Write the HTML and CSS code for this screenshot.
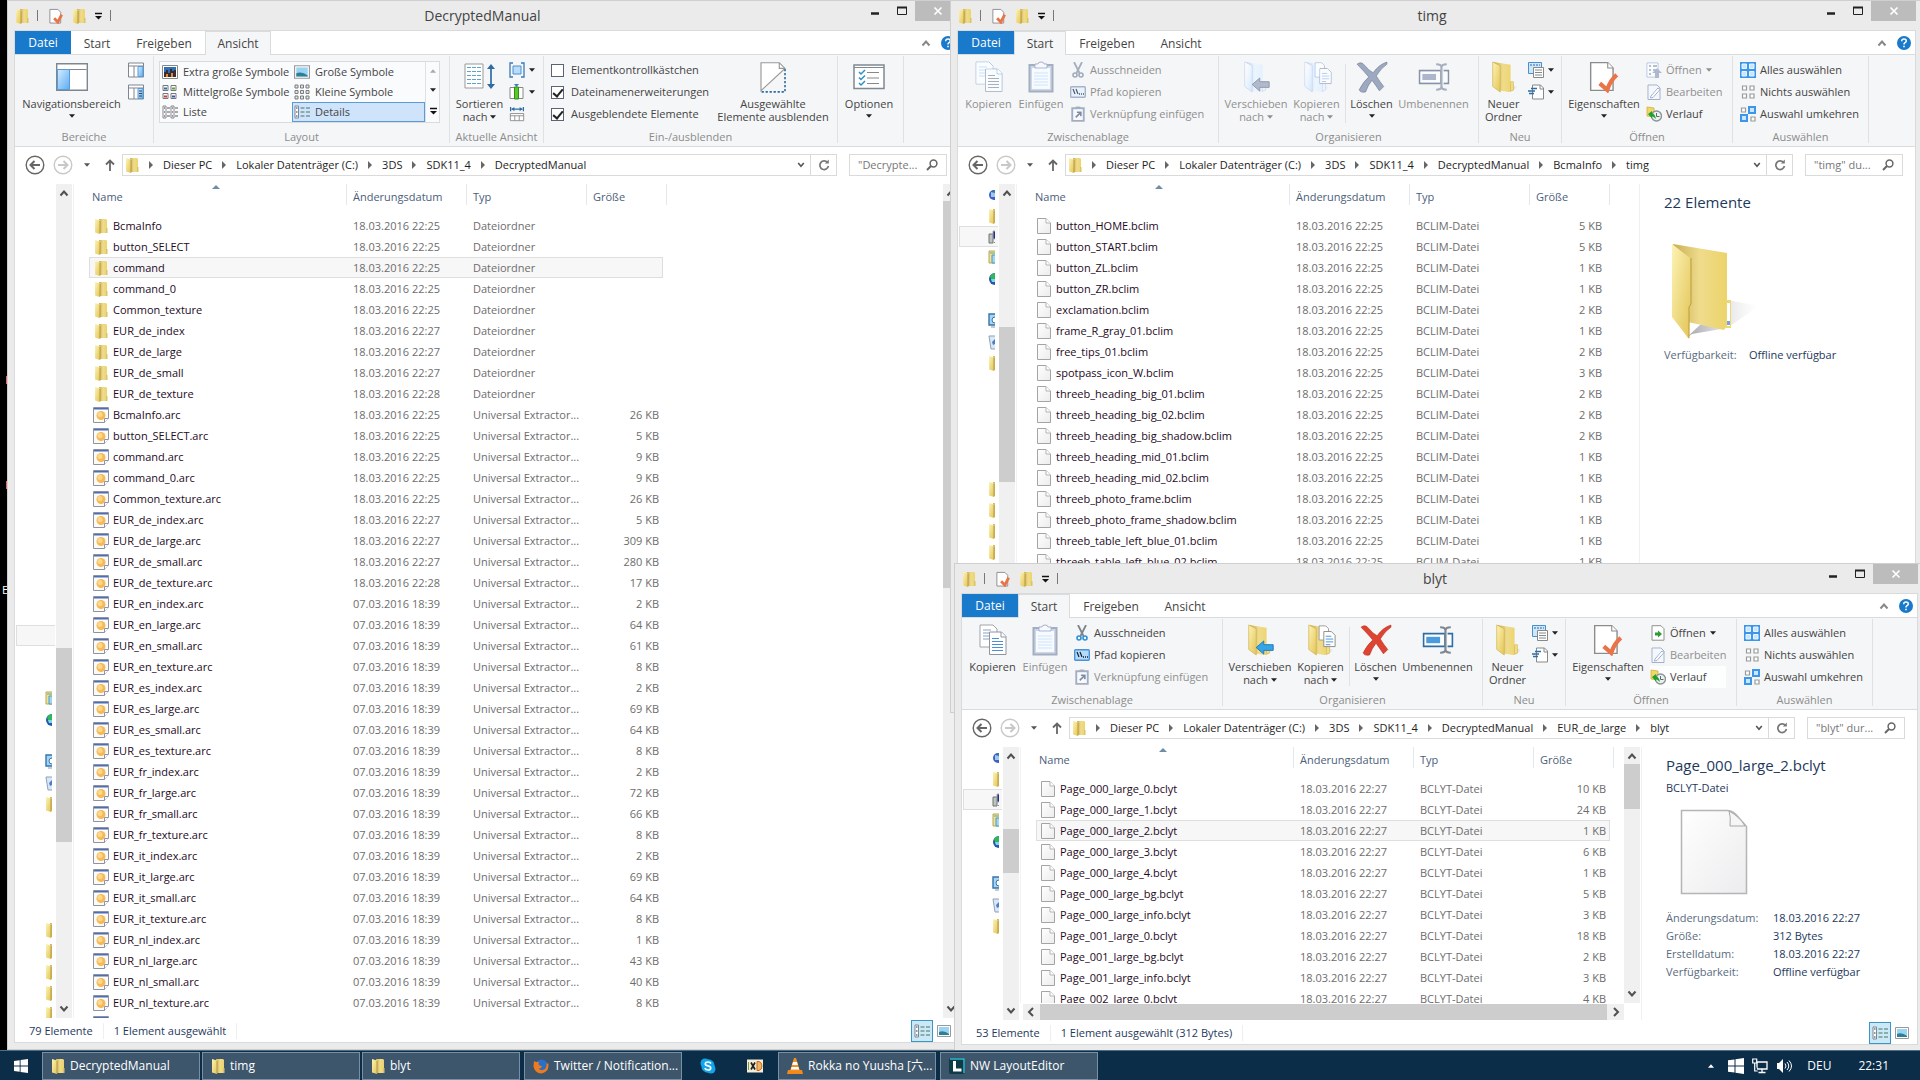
FILE: index.html
```html
<!DOCTYPE html>
<html lang="de">
<head>
<meta charset="utf-8">
<title>Desktop</title>
<link rel="stylesheet" href="styles.css">
</head>
<body>
<svg class="sprite" width="0" height="0" aria-hidden="true">
  <defs>
    <linearGradient id="gFold" x1="0" y1="0" x2="1" y2="1"><stop offset="0" stop-color="#fdf3b4"/><stop offset="1" stop-color="#e3c558"/></linearGradient>
    <linearGradient id="gBack" x1="0" y1="0" x2="1" y2="0"><stop offset="0" stop-color="#c9ad55"/><stop offset=".5" stop-color="#efdc8c"/><stop offset="1" stop-color="#ecd36a"/></linearGradient>
    <linearGradient id="gPage" x1="0" y1="0" x2="1" y2="1"><stop offset="0" stop-color="#ffffff"/><stop offset="1" stop-color="#ececee"/></linearGradient>
    <linearGradient id="gBlue" x1="0" y1="0" x2="1" y2="1"><stop offset="0" stop-color="#d5ebff"/><stop offset="1" stop-color="#5aaef5"/></linearGradient>
    <linearGradient id="gShade" x1="0" y1="0" x2="1" y2="0"><stop offset="0" stop-color="#8a8a94" stop-opacity=".8"/><stop offset="1" stop-color="#d8d8dc" stop-opacity="0"/></linearGradient>
  </defs>
  <symbol id="folder" viewBox="0 0 14 16"><path d="M5 1h7l1 1v13l-8 0z" fill="url(#gBack)"/><path d="M1 1l5 1.500v13.500l-5-1.500z" fill="url(#gFold)"/><path d="M6 3v12.500" stroke="#b79a3e" stroke-width="1"/><path d="M12 10h1.500v5h-1.500z" fill="#d9c468"/></symbol>
  <symbol id="folder-lg" viewBox="0 0 32 34"><path d="M21 24l10 4-9 5z" fill="url(#gShade)"/><path d="M5 1l18 3v22l2 1v4l-4 2-11-2z" fill="url(#gBack)"/><path d="M4 1l8 4v28l-8-6z" fill="url(#gFold)" stroke="#cfae4a" stroke-width=".7"/><path d="M23 22h3v9l-3 1z" fill="#f3df84" stroke="#cfae4a" stroke-width=".6"/></symbol>
  <symbol id="folder-xl" viewBox="0 0 90 98"><path d="M58 58l32 6-32 22-35 6-6 4z" fill="url(#gShade)"/><path d="M4 2l54 9v72l-3 5-36-8z" fill="url(#gBack)"/><path d="M3 2l18 14v46l-1 35-17-22z" fill="url(#gFold)"/><path d="M22 16v46l-2 3v31" fill="none" stroke="#bd9c3c"/><path d="M57 58h5v28h-5z" fill="#ecd873"/><path d="M58 61h3v23h-3z" fill="#fff"/><path d="M58 79h3v4h-3z" fill="#7f9fdb"/></symbol>
  <symbol id="page" viewBox="0 0 14 16"><path d="M.5.500h8.500l4.500 4.500v10.500h-13z" fill="url(#gPage)" stroke="#a4a4a4"/><path d="M9 .500v4.500h4.500" fill="#fff" stroke="#b4b4b4"/></symbol>
  <symbol id="page-xl" viewBox="0 0 68 86"><path d="M1.500 1.500h46q6 0 12 8l7 8v67h-65z" fill="url(#gPage)" stroke="#b5b5b5" stroke-width="1.500"/><path d="M49 2q2 6 1 15h15q-5-9-16-15z" fill="#f6f6f6" stroke="#a8a8a8"/></symbol>
  <symbol id="arc" viewBox="0 0 16 16"><path d="M.5.500h15v10.500l-4 4.500h-11z" fill="#fbfaf5" stroke="#8d92a6"/><path d="M1 1h14v1.500h-14z" fill="#4a6fb8"/><circle cx="8" cy="8.500" r="4.500" fill="#f6b95a"/><circle cx="7" cy="7.500" r="2.500" fill="#fcd98a"/><path d="M11.500 15.500v-4h4" fill="#fff" stroke="#8d92a6"/></symbol>
  <symbol id="props" viewBox="0 0 16 17"><path d="M1.500 1.500h8.500l3 3v11.500h-11.500z" fill="#fff" stroke="#8d8d8d"/><path d="M6 11l4 4 4-8" fill="none" stroke="#ea7347" stroke-width="3"/></symbol>
  <symbol id="props-lg" viewBox="0 0 28 30"><path d="M1.500 1.500h16l5 5v21h-21z" fill="#fff" stroke="#8c8c8c" stroke-width="1.300"/><path d="M17.500 1.500v5h5" fill="#fff" stroke="#8c8c8c"/><path d="M10 21l7 6q3-9 9-14" fill="none" stroke="#ea7347" stroke-width="4"/></symbol>
  <symbol id="qat" viewBox="0 0 8 8"><path d="M1 1.500h7" stroke="#111" stroke-width="1.500"/><path d="M1 4h7l-3.500 3.500z" fill="#111"/></symbol>
  <symbol id="down" viewBox="0 0 7 4"><path d="M0 0h7l-3.500 4z" fill="currentColor"/></symbol>
  <symbol id="up" viewBox="0 0 7 4"><path d="M0 4h7l-3.500-4z" fill="currentColor"/></symbol>
  <symbol id="chev-u" viewBox="0 0 10 8"><path d="M1.500 6.500l3.500-4 3.500 4" fill="none" stroke="currentColor" stroke-width="2"/></symbol>
  <symbol id="chev-d" viewBox="0 0 10 8"><path d="M1.500 1.500l3.500 4 3.500-4" fill="none" stroke="currentColor" stroke-width="2"/></symbol>
  <symbol id="chev-l" viewBox="0 0 8 10"><path d="M6 1l-4 4 4 4" fill="none" stroke="currentColor" stroke-width="2"/></symbol>
  <symbol id="chev-r" viewBox="0 0 8 10"><path d="M2 1l4 4-4 4" fill="none" stroke="currentColor" stroke-width="2"/></symbol>
  <symbol id="min" viewBox="0 0 10 10"><path d="M1 7.500h8" stroke="#222" stroke-width="2.500"/></symbol>
  <symbol id="max" viewBox="0 0 10 10"><path d="M.5 1.500h9v7h-9z" fill="none" stroke="#222"/><path d="M0 1.500h10" stroke="#222" stroke-width="2"/></symbol>
  <symbol id="close" viewBox="0 0 10 10"><path d="M1.500 1.500l7 7M8.500 1.500l-7 7" stroke="#fff" stroke-width="1.700"/></symbol>
  <symbol id="help" viewBox="0 0 14 14"><circle cx="7" cy="7" r="7" fill="#1979ca"/><path d="M4.700 5.200q0-2.200 2.300-2.200t2.300 2q0 1-1.200 1.700t-1.100 1.800" fill="none" stroke="#fff" stroke-width="1.500"/><path d="M6.200 9.800h1.600v1.500h-1.600z" fill="#fff"/></symbol>
  <symbol id="back" viewBox="0 0 20 20"><circle cx="10" cy="10" r="8.800" fill="#fff" stroke="currentColor" stroke-width="1.400"/><path d="M15 10h-9M9.500 6l-4 4 4 4" fill="none" stroke="currentColor" stroke-width="2"/></symbol>
  <symbol id="fwd" viewBox="0 0 20 20"><circle cx="10" cy="10" r="8.800" fill="#fff" stroke="currentColor" stroke-width="1.400"/><path d="M5 10h9M10.500 6l4 4-4 4" fill="none" stroke="currentColor" stroke-width="2"/></symbol>
  <symbol id="upnav" viewBox="0 0 10 12"><path d="M5 12v-10M1 5.500l4-4 4 4" fill="none" stroke="#666" stroke-width="1.800"/></symbol>
  <symbol id="reload" viewBox="0 0 12 12"><path d="M9.500 3.500a4.300 4.300 0 1 0 .9 3.500" fill="none" stroke="#777" stroke-width="1.700"/><path d="M10.800.500v4h-4z" fill="#777"/></symbol>
  <symbol id="lens" viewBox="0 0 12 12"><circle cx="7.500" cy="4.500" r="3.400" fill="none" stroke="#666" stroke-width="1.500"/><path d="M5 7l-4 4" stroke="#666" stroke-width="2"/></symbol>
  <symbol id="navpane" viewBox="0 0 32 28"><path d="M.7.700h30.600v26.600h-30.600z" fill="#fff" stroke="#7e8790" stroke-width="1.400"/><path d="M1.500 6.500h29" stroke="#7e8790"/><path d="M1.500 6.500h12v20h-12z" fill="url(#gBlue)" stroke="#5a9bd5"/></symbol>
  <symbol id="prevpane" viewBox="0 0 16 16"><path d="M.5 1h15v14h-15z" fill="#fff" stroke="#7e8790"/><path d="M.5 4h15M6 4v11" stroke="#7e8790"/><path d="M10 4.500h5v10h-5z" fill="url(#gBlue)" stroke="#5a9bd5"/></symbol>
  <symbol id="detpane" viewBox="0 0 16 16"><path d="M.5 1h15v14h-15z" fill="#fff" stroke="#7e8790"/><path d="M.5 4h15M6 4v11" stroke="#7e8790"/><path d="M10 4.500h5v10h-5z" fill="url(#gBlue)" stroke="#5a9bd5"/><path d="M11 7h3M11 9.500h3M11 12h3" stroke="#345"/></symbol>
  <symbol id="v-xl" viewBox="0 0 16 14"><path d="M.5.500h15v13h-15z" fill="#fff" stroke="#888"/><path d="M2 2h12v10h-12z" fill="#2f6fb5"/><path d="M2 12v-5h2v-2h2v3h2v-4h2v2h2v-1h2v7z" fill="#3a2c34"/><path d="M4 9h2v3h-2zM9 8h2v4h-2z" fill="#e48b2a"/></symbol>
  <symbol id="v-l" viewBox="0 0 14 12"><path d="M.5.500h13v11h-13z" fill="#fff" stroke="#999"/><path d="M2 2h10v8h-10z" fill="#9bd3f2"/><path d="M2 7q5-2 10 2v1h-10z" fill="#2d7f96"/></symbol>
  <symbol id="v-m" viewBox="0 0 16 15"><path d="M1 1h5v5h-5zM9 1h5v5h-5zM1 9h5v5h-5zM9 9h5v5h-5z" fill="#fff" stroke="#777"/><path d="M2 3h3v2h-3z" fill="#2d6fa8"/><path d="M10 3h3v2h-3z" fill="#58a33a"/><path d="M2 11h3v2h-3z" fill="#c74130"/><path d="M10 11h3v2h-3z" fill="#3b55a8"/></symbol>
  <symbol id="v-s" viewBox="0 0 16 16"><path d="M1 1h3v3h-3zM6.500 1h3v3h-3zM12 1h3v3h-3zM1 6.500h3v3h-3zM6.500 6.500h3v3h-3zM12 6.500h3v3h-3zM1 12h3v3h-3zM6.500 12h3v3h-3zM12 12h3v3h-3z" fill="#dfe8ee" stroke="#7b7b7b"/></symbol>
  <symbol id="v-list" viewBox="0 0 16 14"><path d="M1 1h3v12h-3zM9 1h3v12h-3z" fill="#fff" stroke="#888"/><path d="M2 3h1M2 7h1M2 11h1M10 3h1M10 7h1M10 11h1" stroke="#333"/><path d="M5 3h3M5 7h3M5 11h3M13 3h3M13 7h3M13 11h3" stroke="#557"/></symbol>
  <symbol id="v-det" viewBox="0 0 16 14"><path d="M1 1h3.500v12h-3.500z" fill="#fff" stroke="#7b8796"/><path d="M2 3h1.500M2 7h1.500M2 11h1.500" stroke="#333"/><path d="M6.500 3h4M6.500 7h4M6.500 11h4M12 3h4M12 7h4M12 11h4" stroke="#476"/></symbol>
  <symbol id="sort" viewBox="0 0 32 28"><path d="M1 1h18v24h-18z" fill="#fff" stroke="#999"/><path d="M3 4.500h14M3 8.500h14M3 12.500h14M3 16.500h14M3 20.500h14" stroke="#5ba5c9" stroke-dasharray="4 1"/><path d="M27 3v21" stroke="#2e6da4" stroke-width="1.700"/><path d="M23 6l4-5 4 5zM23 21l4 5 4-5z" fill="#2e6da4"/></symbol>
  <symbol id="group" viewBox="0 0 16 16"><path d="M4 1h-3v14h3M12 1h3v14h-3" fill="none" stroke="#3a7ab8" stroke-width="1.300"/><path d="M4 4h8v8h-8z" fill="#b9dcf8" stroke="#4a90cf"/></symbol>
  <symbol id="addcol" viewBox="0 0 16 16"><path d="M1 3.500h13v11h-13z" fill="#fff" stroke="#888"/><path d="M5.500 3h4v12h-4z" fill="#59c929" stroke="#2f8f17"/><path d="M5 0h5l-2.500 3z" fill="#3a7ab8"/></symbol>
  <symbol id="fitcol" viewBox="0 0 16 18"><path d="M.8 1v5M15.200 1v5M2 3.500h12" stroke="#2e6da4" stroke-width="1.400"/><path d="M2 3.500l3-2.500v5zM14 3.500l-3-2.500v5z" fill="#2e6da4"/><path d="M.5 8.500h15v8h-15zM.500 11h15M5.500 11v5.500M10.500 11v5.500" fill="#fff" stroke="#888"/></symbol>
  <symbol id="hide" viewBox="0 0 24 28"><path d="M1.500 26v-24.500h16l5 5z" fill="#fff" stroke="#999"/><path d="M17.500 1.500v5h5" fill="none" stroke="#999"/><path d="M22.500 7v20h-21" fill="none" stroke="#2e6da4" stroke-width="1.400" stroke-dasharray="2 1.500"/></symbol>
  <symbol id="options" viewBox="0 0 32 26"><path d="M1 1h30v23.500h-30z" fill="#fff" stroke="#808891" stroke-width="1.500"/><path d="M1 3.500h30" stroke="#808891"/><path d="M14 8.500h12M14 14h12M14 19.500h12" stroke="#888"/><path d="M6 8l2 2 4-4M6 13.500l2 2 4-4M6 19l2 2 4-4" fill="none" stroke="#2e8fc9" stroke-width="1.500"/></symbol>
  <symbol id="copy" viewBox="0 0 28 32"><path d="M1 1h13l4 4v18h-17z" fill="#fff" stroke="#a0a4aa"/><path d="M4 6h8M4 9h6M4 12h6M4 15h6" stroke="#8aa2bf"/><path d="M10.500 8h12l4.500 4.500v18h-16.500z" fill="#fff" stroke="#8f959c"/><path d="M22 8v5h5" fill="#fff" stroke="#8f959c"/><path d="M13 14.500h7M13 17.500h11M13 20.500h11M13 23.500h11M13 26.500h11" stroke="#4a90d9"/></symbol>
  <symbol id="paste" viewBox="0 0 26 32"><path d="M1.500 4h23v26.500h-23z" fill="#a8b6cb" stroke="#7286a8" stroke-width="2"/><path d="M4 7h18v21h-18z" fill="#e4ecf8"/><path d="M6 12h14M6 15h14M6 18h14M6 21h14M6 24h14" stroke="#a9b9d2"/><path d="M7 3h3q0-2 3-2t3 2h3v4h-12z" fill="#e2e9f3" stroke="#7286a8"/></symbol>
  <symbol id="cut" viewBox="0 0 12 16"><path d="M2 0l5.500 11M10 0l-5.500 11" stroke="#7c858e" stroke-width="1.800"/><circle cx="3" cy="13" r="2" fill="none" stroke="#2f8fd8" stroke-width="1.600"/><circle cx="9" cy="13" r="2" fill="none" stroke="#2f8fd8" stroke-width="1.600"/></symbol>
  <symbol id="path" viewBox="0 0 16 12"><rect x=".7" y=".7" width="14.600" height="10.600" rx="1" fill="#b6dbfa" stroke="#4a93d6" stroke-width="1.400"/><path d="M3 3l2 5M6 3l2 5" stroke="#123" stroke-width="1.200"/><path d="M9 8h1M11 8h1M13 8h1" stroke="#123" stroke-width="1.400"/></symbol>
  <symbol id="link" viewBox="0 0 12 14"><path d="M1 2h10v11h-10z" fill="#dde8f8" stroke="#6f86ad" stroke-width="1.700"/><path d="M4 .5h4v2h-4z" fill="#6f86ad"/><path d="M4 10l4-4M5 5.500h3.500v3.500" fill="none" stroke="#3c5c92" stroke-width="1.400"/></symbol>
  <symbol id="moveto" viewBox="0 0 32 34"><use href="#folder-lg" width="32" height="34"/><path d="M12 25l8-7v4h10v6h-10v4z" fill="#35a5ea" stroke="#1d78b8"/></symbol>
  <symbol id="copyto" viewBox="0 0 32 34"><use href="#folder-lg" x="-1" width="32" height="34"/><path d="M14 2h7l3 3v12h-10z" fill="#fff" stroke="#9a9a9a"/><path d="M19 8h8l4 4v12h-12z" fill="#fff" stroke="#8b8b8b"/><path d="M21 13h6M21 16h8M21 19h8M21 22h5" stroke="#4a90d9"/></symbol>
  <symbol id="delete" viewBox="0 0 30 30"><path d="M1 3q4-3 7 1 4 5 8 7 6-8 13-10l0 2q-5 3-10 11 3 5 7 10l-4 4q-4-6-7-10-4 5-6 11-5 1-6-2 4-8 9-12-4-5-11-12z" fill="#dd4432" stroke="#c02c20" stroke-width=".6"/></symbol>
  <symbol id="rename" viewBox="0 0 30 28"><path d="M1.500 8h20v12h-20z" fill="#fff" stroke="#2e6da4" stroke-width="1.500"/><path d="M4 11h13v6h-13z" fill="#4a9be0"/><path d="M24 8h4.500v12h-4.500" fill="#fff" stroke="#2e6da4" stroke-width="1.500"/><path d="M17 2q5 0 5 3v18q0 3-5 3M27 2q-5 0-5 3M27 26q-5 0-5-3" fill="none" stroke="#7c8791" stroke-width="2"/></symbol>
  <symbol id="newitem" viewBox="0 0 16 16"><path d="M.5.500h13v11h-13z" fill="#cfe6fb" stroke="#4a90cf"/><path d="M2 3h10" stroke="#2e6da4" stroke-dasharray="2 1"/><path d="M5.500 5.500h10v10h-10z" fill="#fff" stroke="#888"/><path d="M7 8h7M7 10.500h7M7 13h7" stroke="#888"/></symbol>
  <symbol id="easy" viewBox="0 0 16 16"><path d="M4.500 1h8l3 3v11h-11z" fill="#fff" stroke="#888"/><path d="M12 1v4h3" fill="none" stroke="#888"/><path d="M3 4.500h6M0 7h7M1 9.500h5" stroke="#2e6da4" stroke-width="1.400"/></symbol>
  <symbol id="open" viewBox="0 0 14 16"><path d="M1 .700h9l3 3v11.500h-12z" fill="#fff" stroke="#909090"/><path d="M4 7.500h3v-2l4 3.500-4 3.500v-2h-3z" fill="#2f9a3a"/></symbol>
  <symbol id="open-d" viewBox="0 0 16 16"><path d="M1 1h11v14h-11z" fill="#fff" stroke="#8a9bb8"/><path d="M3 4h2M7 4h4M3 8h2M7 8h4M3 12h2" stroke="#5d78a8" stroke-width="1.500"/><path d="M11 6l5 5h-3v5h-4v-5h-3z" fill="#7f93b5"/></symbol>
  <symbol id="edit" viewBox="0 0 14 16"><path d="M1 1h9l3 3v11.500h-12z" fill="#d3e2f6" stroke="#7089b0"/><path d="M4 12l7-8 2 1.500-7 8-2.500.500z" fill="#fff" stroke="#6a83ac"/></symbol>
  <symbol id="history" viewBox="0 0 16 16"><path d="M1 1l7 1v9l-7-1z" fill="#f1d768" stroke="#cfb040" stroke-width=".8"/><circle cx="10.500" cy="10" r="5" fill="#e9f3ee" stroke="#8a9299" stroke-width="1.400"/><path d="M10.500 7v3.500h3" fill="none" stroke="#667"/><path d="M2 8l4-3v2q3 1 4 6-3-3-4-2.500v2z" fill="#22a02c"/></symbol>
  <symbol id="selall" viewBox="0 0 16 16"><path d="M0 0h16v16h-16z" fill="#3c96ea"/><path d="M2 2h4.500v4.500h-4.500zM9.500 2h4.500v4.500h-4.500zM2 9.500h4.500v4.500h-4.500zM9.500 9.500h4.500v4.500h-4.500z" fill="#cbe5fc" stroke="#e9f5ff"/></symbol>
  <symbol id="selnone" viewBox="0 0 16 16"><path d="M2.500 2h4v4h-4zM10 2h4v4h-4zM2.500 10h4v4h-4zM10 10h4v4h-4z" fill="#fff" stroke="#9a9a9a" stroke-width="1.200"/></symbol>
  <symbol id="selinv" viewBox="0 0 16 16"><path d="M1.500 2h4v4h-4zM11 11h4v4h-4z" fill="#fff" stroke="#9a9a9a" stroke-width="1.200"/><path d="M9 1h6v6h-6zM1 9h6v6h-6z" fill="#cbe5fc" stroke="#3c96ea" stroke-width="2"/></symbol>
  <symbol id="n-net" viewBox="0 0 14 14"><circle cx="6" cy="7" r="5" fill="#3b63c4"/><path d="M3 4l4 1 0 4-4 0z" fill="#a7c4ee"/><path d="M6 3l2-2v8z" fill="#3fa045"/></symbol>
  <symbol id="n-pc" viewBox="0 0 14 16"><path d="M1 5h4v9h-4z" fill="#bfc4bf" stroke="#70756f"/><path d="M5 2h9v8h-9z" fill="#20307f" stroke="#aab"/><path d="M6 13h3v1h-3z" fill="#889"/></symbol>
  <symbol id="n-lib" viewBox="0 0 14 16"><path d="M1 1h10v12h-10z" fill="#efe09a" stroke="#b9a75a"/><path d="M4 5h9v8h-9z" fill="#a5d5ec" stroke="#4a9cc2"/><path d="M2 3h6" stroke="#6a8"/></symbol>
  <symbol id="n-home" viewBox="0 0 14 14"><circle cx="7" cy="7" r="6" fill="#2458a8"/><path d="M2 4q3-4 6-2v5l-4 3z" fill="#2fb85a"/><path d="M3 7h5v3h-4z" fill="#7fd4ea"/></symbol>
  <symbol id="n-panel" viewBox="0 0 14 16"><path d="M1 1h12v11h-12z" fill="#a9d3f2" stroke="#3376ac" stroke-width="1.400"/><circle cx="7" cy="7" r="3" fill="#fff" stroke="#3376ac"/><path d="M3 14h8" stroke="#89a"/></symbol>
  <symbol id="n-bin" viewBox="0 0 14 16"><path d="M1 2h12l-2 13h-8z" fill="#dbe7f4" stroke="#8ca3be"/><path d="M4 8l3-3 2 4-4 2z" fill="#4a80c4"/></symbol>
  <symbol id="win" viewBox="0 0 16 16"><path d="M0 2.300l6.500-.9v6.100h-6.500zM7.500 1.200l8.500-1.200v7.500h-8.500zM0 8.500h6.500v6.100l-6.500-.9zM7.500 8.500h8.500v7.500l-8.500-1.200z" fill="#fff"/></symbol>
  <symbol id="firefox" viewBox="0 0 16 16"><circle cx="8.500" cy="7.500" r="6" fill="#2d6fc4"/><path d="M1 3q1 1 2.500 1 1.500 0 2.500 0-1 2 0 3 1 1 3 1-1 3-3.500 2.500 3 3 6.500.5 2-2 1.500-6l1 1 .5-1.500q1.500 5-1.500 8.500-3.500 3.500-8 2-4.500-2-5-7z" fill="#ef7b1f"/></symbol>
  <symbol id="skype" viewBox="0 0 16 16"><circle cx="5" cy="5" r="4.500" fill="#12a5e9"/><circle cx="11" cy="11" r="4.500" fill="#12a5e9"/><circle cx="8" cy="8" r="6.700" fill="#12a5e9"/><path d="M11 5.500q-1-1.500-3-1.500-2.700 0-2.700 1.900 0 1.400 2.700 1.900t2.700 2.100q0 2.100-2.700 2.100-2.200 0-3.200-1.800" fill="none" stroke="#fff" stroke-width="1.700"/></symbol>
  <symbol id="hxd" viewBox="0 0 16 13"><path d="M0 0h16v13h-16z" fill="#f3ecd8"/><path d="M1.500 2.500v8" stroke="#7a9a3a"/><path d="M4 3l4 7M8 3l-4 7" stroke="#222" stroke-width="1.700"/><path d="M10 2h2q3 1 3 4.500t-3 4.500h-2z" fill="#f0b46a" stroke="#c8681a"/></symbol>
  <symbol id="vlc" viewBox="0 0 16 16"><path d="M1 12h14l1 4h-16z" fill="#f08a1c"/><path d="M7 0h2l4 13h-10z" fill="#f59121"/><path d="M6 4h4l.8 3h-5.600zM4.600 9h6.800l.8 2.500h-8.400z" fill="#fff"/></symbol>
  <symbol id="nw" viewBox="0 0 16 16"><rect width="16" height="16" rx="2" fill="#0d3c46"/><path d="M1 1h14v14" fill="none" stroke="#2fb8d2" stroke-width="1.500"/><path d="M5.500 3v9h7" fill="none" stroke="#fff" stroke-width="3"/></symbol>
  <symbol id="net" viewBox="0 0 16 16"><path d="M5 4h10v7h-10zM10 11v3M6.500 14.500h7" fill="none" stroke="#fff" stroke-width="1.300"/><path d="M.7 1h4v4h-4zM2.700 5v8h3" fill="#0b2d48" stroke="#fff" stroke-width="1.200"/></symbol>
  <symbol id="vol" viewBox="0 0 16 16"><path d="M1 5h2l4-4v14l-4-4h-2z" fill="#fff"/><path d="M9 5.500q2 2.500 0 5M11 4q3.500 4 0 8M13 2.500q5 5.500 0 11" fill="none" stroke="#fff"/></symbol>
</svg>

<div class="screen">
<main class="desktop">
  <span class="desk-mark desk-red"></span><span class="desk-mark desk-red2"></span>
  <span class="desk-mark desk-label">E</span>

  <section class="window win-manual">
    <header class="titlebar">
      <span class="qat"><svg class="i-file"><use href="#folder"/></svg><i class="bar"></i><button class="ib" aria-label="Eigenschaften"><svg class="i16"><use href="#props"/></svg></button><button class="ib" aria-label="Neuer Ordner"><svg class="i-file"><use href="#folder"/></svg></button><button class="ib" aria-label="Anpassen"><svg class="i8"><use href="#qat"/></svg></button><i class="bar"></i></span>
      <h1>DecryptedManual</h1>
      <span class="winbtns"><button class="ib" aria-label="Minimieren"><svg class="i10"><use href="#min"/></svg></button><button class="ib" aria-label="Maximieren"><svg class="i10"><use href="#max"/></svg></button><button class="ib closebtn" aria-label="Schließen"><svg class="i10"><use href="#close"/></svg></button></span>
    </header>
    <div class="client">
      <nav class="tabs"><button class="tab file">Datei</button><button class="tab t-start">Start</button><button class="tab t-share">Freigeben</button><button class="tab t-view active">Ansicht</button><span class="tabtools"><svg class="i10"><use href="#chev-u"/></svg><svg class="i14"><use href="#help"/></svg></span></nav>
      <div class="ribbon ribbon-view">
        <div class="group"><div class="tools">
          <button class="big w-nav"><svg class="i32"><use href="#navpane"/></svg><span>Navigationsbereich</span><svg class="arr"><use href="#down"/></svg></button>
          <div class="stack"><button class="small" aria-label="Vorschaufenster"><svg class="i16"><use href="#prevpane"/></svg></button><button class="small" aria-label="Detailbereich"><svg class="i16"><use href="#detpane"/></svg></button></div>
        </div><p>Bereiche</p></div>
        <div class="group"><div class="tools">
          <div class="gallery"><div class="gitems">
            <button><svg class="i16"><use href="#v-xl"/></svg>Extra große Symbole</button><button><svg class="i16"><use href="#v-l"/></svg>Große Symbole</button>
            <button><svg class="i16"><use href="#v-m"/></svg>Mittelgroße Symbole</button><button><svg class="i16"><use href="#v-s"/></svg>Kleine Symbole</button>
            <button><svg class="i16"><use href="#v-list"/></svg>Liste</button><button class="on"><svg class="i16"><use href="#v-det"/></svg>Details</button>
          </div><div class="gscroll"><svg class="arr dim"><use href="#up"/></svg><svg class="arr"><use href="#down"/></svg><svg class="i8"><use href="#qat"/></svg></div></div>
        </div><p>Layout</p></div>
        <div class="group"><div class="tools">
          <button class="big w-sort"><svg class="i32"><use href="#sort"/></svg><span>Sortieren<br>nach <svg class="arr"><use href="#down"/></svg></span></button>
          <div class="stack"><button class="small" aria-label="Gruppieren nach"><svg class="i16"><use href="#group"/></svg><svg class="arr"><use href="#down"/></svg></button><button class="small" aria-label="Spalten hinzufügen"><svg class="i16"><use href="#addcol"/></svg><svg class="arr"><use href="#down"/></svg></button><button class="small" aria-label="Spaltenbreite anpassen"><svg class="i16"><use href="#fitcol"/></svg></button></div>
        </div><p>Aktuelle Ansicht</p></div>
        <div class="group"><div class="tools">
          <div class="stack checks"><label class="small"><input type="checkbox">Elementkontrollkästchen</label><label class="small"><input type="checkbox" checked>Dateinamenerweiterungen</label><label class="small"><input type="checkbox" checked>Ausgeblendete Elemente</label></div>
          <button class="big w-hide"><svg class="i32"><use href="#hide"/></svg><span>Ausgewählte<br>Elemente ausblenden</span></button>
        </div><p>Ein-/ausblenden</p></div>
        <div class="group"><div class="tools"><button class="big w-opt"><svg class="i32"><use href="#options"/></svg><span>Optionen</span><svg class="arr"><use href="#down"/></svg></button></div></div>
      </div>
      <div class="navrow">
        <button class="ib hist" aria-label="Zurück"><svg class="i20"><use href="#back"/></svg></button><button class="ib hist off" aria-label="Vorwärts"><svg class="i20"><use href="#fwd"/></svg></button><svg class="arr"><use href="#down"/></svg><button class="ib" aria-label="Nach oben"><svg class="i12"><use href="#upnav"/></svg></button>
        <div class="address"><svg class="i-file"><use href="#folder"/></svg><a href="#">Dieser PC</a><a href="#">Lokaler Datenträger (C:)</a><a href="#">3DS</a><a href="#">SDK11_4</a><a href="#">DecryptedManual</a><svg class="i8 last"><use href="#chev-d"/></svg><button class="ib reload" aria-label="Aktualisieren"><svg class="i12"><use href="#reload"/></svg></button></div>
        <div class="search"><input type="text" aria-label="Suchen" placeholder="&quot;Decrypte..."><svg class="i12"><use href="#lens"/></svg></div>
      </div>
      <div class="body">
        <ul class="tree" data-tree="21:sel 24:n-lib 25:n-home 27:n-panel 28:n-bin 29:folder 35:folder 36:folder 37:folder 38:folder 39:folder"></ul>
        <div class="vbar treebar"><svg class="i10"><use href="#chev-u"/></svg><i class="th-manual-tree"></i><svg class="i10"><use href="#chev-d"/></svg></div>
        <div class="list"><table><thead><tr><th class="c-name">Name</th><th class="c-date">Änderungsdatum</th><th class="c-type">Typ</th><th class="c-size">Größe</th></tr></thead><tbody id="rows-manual"></tbody></table></div>
        <div class="vbar"><svg class="i10"><use href="#chev-u"/></svg><i class="th-manual"></i><svg class="i10"><use href="#chev-d"/></svg></div>
      </div>
      <footer class="status"><span>79 Elemente</span><span>1 Element ausgewählt</span><button class="ib viewbtn on" aria-label="Details"><svg class="i16"><use href="#v-det"/></svg></button><button class="ib viewbtn" aria-label="Miniaturansicht"><svg class="i14"><use href="#v-l"/></svg></button></footer>
    </div>
  </section>

  <section class="window win-timg">
    <header class="titlebar">
      <span class="qat"><svg class="i-file"><use href="#folder"/></svg><i class="bar"></i><button class="ib" aria-label="Eigenschaften"><svg class="i16"><use href="#props"/></svg></button><button class="ib" aria-label="Neuer Ordner"><svg class="i-file"><use href="#folder"/></svg></button><button class="ib" aria-label="Anpassen"><svg class="i8"><use href="#qat"/></svg></button><i class="bar"></i></span>
      <h1>timg</h1>
      <span class="winbtns"><button class="ib" aria-label="Minimieren"><svg class="i10"><use href="#min"/></svg></button><button class="ib" aria-label="Maximieren"><svg class="i10"><use href="#max"/></svg></button><button class="ib closebtn" aria-label="Schließen"><svg class="i10"><use href="#close"/></svg></button></span>
    </header>
    <div class="client">
      <nav class="tabs"><button class="tab file">Datei</button><button class="tab t-start active">Start</button><button class="tab t-share">Freigeben</button><button class="tab t-view">Ansicht</button><span class="tabtools"><svg class="i10"><use href="#chev-u"/></svg><svg class="i14"><use href="#help"/></svg></span></nav>
      <div class="ribbon ribbon-start">
        <div class="group"><div class="tools">
          <button class="big w-copy" disabled><svg class="i32"><use href="#copy"/></svg><span>Kopieren</span></button>
          <button class="big w-paste" disabled><svg class="i32"><use href="#paste"/></svg><span>Einfügen</span></button>
          <div class="stack"><button class="small" disabled><svg class="i16"><use href="#cut"/></svg>Ausschneiden</button><button class="small" disabled><svg class="i16"><use href="#path"/></svg>Pfad kopieren</button><button class="small" disabled><svg class="i16"><use href="#link"/></svg>Verknüpfung einfügen</button></div>
        </div><p>Zwischenablage</p></div>
        <div class="group"><div class="tools">
          <button class="big w-move" disabled><svg class="i32"><use href="#moveto"/></svg><span>Verschieben<br>nach <svg class="arr"><use href="#down"/></svg></span></button>
          <button class="big w-copyto" disabled><svg class="i32"><use href="#copyto"/></svg><span>Kopieren<br>nach <svg class="arr"><use href="#down"/></svg></span></button>
          <i class="sep"></i>
          <button class="big w-del tint"><svg class="i32"><use href="#delete"/></svg><span>Löschen</span><svg class="arr"><use href="#down"/></svg></button>
          <button class="big w-ren" disabled><svg class="i32"><use href="#rename"/></svg><span>Umbenennen</span></button>
        </div><p>Organisieren</p></div>
        <div class="group"><div class="tools">
          <button class="big w-new"><svg class="i32"><use href="#folder-lg"/></svg><span>Neuer<br>Ordner</span></button>
          <div class="stack"><button class="small" aria-label="Neues Element"><svg class="i16"><use href="#newitem"/></svg><svg class="arr"><use href="#down"/></svg></button><button class="small" aria-label="Einfacher Zugriff"><svg class="i16"><use href="#easy"/></svg><svg class="arr"><use href="#down"/></svg></button></div>
        </div><p>Neu</p></div>
        <div class="group"><div class="tools">
          <button class="big w-prop"><svg class="i32"><use href="#props-lg"/></svg><span>Eigenschaften</span><svg class="arr"><use href="#down"/></svg></button>
          <div class="stack"><button class="small" disabled><svg class="i16"><use href="#open-d"/></svg>Öffnen<svg class="arr"><use href="#down"/></svg></button><button class="small" disabled><svg class="i16"><use href="#edit"/></svg>Bearbeiten</button><button class="small"><svg class="i16"><use href="#history"/></svg>Verlauf</button></div>
        </div><p>Öffnen</p></div>
        <div class="group"><div class="tools">
          <div class="stack sel"><button class="small"><svg class="i16"><use href="#selall"/></svg>Alles auswählen</button><button class="small"><svg class="i16"><use href="#selnone"/></svg>Nichts auswählen</button><button class="small"><svg class="i16"><use href="#selinv"/></svg>Auswahl umkehren</button></div>
        </div><p>Auswählen</p></div>
      </div>
      <div class="navrow">
        <button class="ib hist" aria-label="Zurück"><svg class="i20"><use href="#back"/></svg></button><button class="ib hist off" aria-label="Vorwärts"><svg class="i20"><use href="#fwd"/></svg></button><svg class="arr"><use href="#down"/></svg><button class="ib" aria-label="Nach oben"><svg class="i12"><use href="#upnav"/></svg></button>
        <div class="address"><svg class="i-file"><use href="#folder"/></svg><a href="#">Dieser PC</a><a href="#">Lokaler Datenträger (C:)</a><a href="#">3DS</a><a href="#">SDK11_4</a><a href="#">DecryptedManual</a><a href="#">BcmaInfo</a><a href="#">timg</a><svg class="i8 last"><use href="#chev-d"/></svg><button class="ib reload" aria-label="Aktualisieren"><svg class="i12"><use href="#reload"/></svg></button></div>
        <div class="search"><input type="text" aria-label="Suchen" placeholder="&quot;timg&quot; du..."><svg class="i12"><use href="#lens"/></svg></div>
      </div>
      <div class="body">
        <ul class="tree" data-tree="0:n-net 1:folder 2:n-pc 3:n-lib 4:n-home 6:n-panel 7:n-bin 8:folder 14:folder 15:folder 16:folder 17:folder"></ul>
        <div class="vbar treebar"><svg class="i10"><use href="#chev-u"/></svg><i class="th-timg-tree"></i></div>
        <div class="list"><table><thead><tr><th class="c-name">Name</th><th class="c-date">Änderungsdatum</th><th class="c-type">Typ</th><th class="c-size">Größe</th></tr></thead><tbody id="rows-timg"></tbody></table></div>
        <aside class="preview"><h2>22 Elemente</h2><svg class="pv-folder"><use href="#folder-xl"/></svg><dl><dt>Verfügbarkeit:</dt><dd>Offline verfügbar</dd></dl></aside>
      </div>
    </div>
  </section>

  <section class="window win-blyt">
    <header class="titlebar">
      <span class="qat"><svg class="i-file"><use href="#folder"/></svg><i class="bar"></i><button class="ib" aria-label="Eigenschaften"><svg class="i16"><use href="#props"/></svg></button><button class="ib" aria-label="Neuer Ordner"><svg class="i-file"><use href="#folder"/></svg></button><button class="ib" aria-label="Anpassen"><svg class="i8"><use href="#qat"/></svg></button><i class="bar"></i></span>
      <h1>blyt</h1>
      <span class="winbtns"><button class="ib" aria-label="Minimieren"><svg class="i10"><use href="#min"/></svg></button><button class="ib" aria-label="Maximieren"><svg class="i10"><use href="#max"/></svg></button><button class="ib closebtn" aria-label="Schließen"><svg class="i10"><use href="#close"/></svg></button></span>
    </header>
    <div class="client">
      <nav class="tabs"><button class="tab file">Datei</button><button class="tab t-start active">Start</button><button class="tab t-share">Freigeben</button><button class="tab t-view">Ansicht</button><span class="tabtools"><svg class="i10"><use href="#chev-u"/></svg><svg class="i14"><use href="#help"/></svg></span></nav>
      <div class="ribbon ribbon-start">
        <div class="group"><div class="tools">
          <button class="big w-copy"><svg class="i32"><use href="#copy"/></svg><span>Kopieren</span></button>
          <button class="big w-paste" disabled><svg class="i32"><use href="#paste"/></svg><span>Einfügen</span></button>
          <div class="stack"><button class="small"><svg class="i16"><use href="#cut"/></svg>Ausschneiden</button><button class="small"><svg class="i16"><use href="#path"/></svg>Pfad kopieren</button><button class="small" disabled><svg class="i16"><use href="#link"/></svg>Verknüpfung einfügen</button></div>
        </div><p>Zwischenablage</p></div>
        <div class="group"><div class="tools">
          <button class="big w-move"><svg class="i32"><use href="#moveto"/></svg><span>Verschieben<br>nach <svg class="arr"><use href="#down"/></svg></span></button>
          <button class="big w-copyto"><svg class="i32"><use href="#copyto"/></svg><span>Kopieren<br>nach <svg class="arr"><use href="#down"/></svg></span></button>
          <i class="sep"></i>
          <button class="big w-del"><svg class="i32"><use href="#delete"/></svg><span>Löschen</span><svg class="arr"><use href="#down"/></svg></button>
          <button class="big w-ren"><svg class="i32"><use href="#rename"/></svg><span>Umbenennen</span></button>
        </div><p>Organisieren</p></div>
        <div class="group"><div class="tools">
          <button class="big w-new"><svg class="i32"><use href="#folder-lg"/></svg><span>Neuer<br>Ordner</span></button>
          <div class="stack"><button class="small" aria-label="Neues Element"><svg class="i16"><use href="#newitem"/></svg><svg class="arr"><use href="#down"/></svg></button><button class="small" aria-label="Einfacher Zugriff"><svg class="i16"><use href="#easy"/></svg><svg class="arr"><use href="#down"/></svg></button></div>
        </div><p>Neu</p></div>
        <div class="group"><div class="tools">
          <button class="big w-prop"><svg class="i32"><use href="#props-lg"/></svg><span>Eigenschaften</span><svg class="arr"><use href="#down"/></svg></button>
          <div class="stack"><button class="small"><svg class="i16"><use href="#open"/></svg>Öffnen<svg class="arr"><use href="#down"/></svg></button><button class="small" disabled><svg class="i16"><use href="#edit"/></svg>Bearbeiten</button><button class="small hot"><svg class="i16"><use href="#history"/></svg>Verlauf</button></div>
        </div><p>Öffnen</p></div>
        <div class="group"><div class="tools">
          <div class="stack sel"><button class="small"><svg class="i16"><use href="#selall"/></svg>Alles auswählen</button><button class="small"><svg class="i16"><use href="#selnone"/></svg>Nichts auswählen</button><button class="small"><svg class="i16"><use href="#selinv"/></svg>Auswahl umkehren</button></div>
        </div><p>Auswählen</p></div>
      </div>
      <div class="navrow">
        <button class="ib hist" aria-label="Zurück"><svg class="i20"><use href="#back"/></svg></button><button class="ib hist off" aria-label="Vorwärts"><svg class="i20"><use href="#fwd"/></svg></button><svg class="arr"><use href="#down"/></svg><button class="ib" aria-label="Nach oben"><svg class="i12"><use href="#upnav"/></svg></button>
        <div class="address"><svg class="i-file"><use href="#folder"/></svg><a href="#">Dieser PC</a><a href="#">Lokaler Datenträger (C:)</a><a href="#">3DS</a><a href="#">SDK11_4</a><a href="#">DecryptedManual</a><a href="#">EUR_de_large</a><a href="#">blyt</a><svg class="i8 last"><use href="#chev-d"/></svg><button class="ib reload" aria-label="Aktualisieren"><svg class="i12"><use href="#reload"/></svg></button></div>
        <div class="search"><input type="text" aria-label="Suchen" placeholder="&quot;blyt&quot; dur..."><svg class="i12"><use href="#lens"/></svg></div>
      </div>
      <div class="body">
        <ul class="tree" data-tree="0:n-net 1:folder 2:n-pc 3:n-lib 4:n-home 6:n-panel 7:n-bin 8:folder"></ul>
        <div class="vbar treebar"><svg class="i10"><use href="#chev-u"/></svg><i class="th-blyt-tree"></i><svg class="i10"><use href="#chev-d"/></svg></div>
        <div class="scroller">
          <div class="list"><table><thead><tr><th class="c-name">Name</th><th class="c-date">Änderungsdatum</th><th class="c-type">Typ</th><th class="c-size">Größe</th></tr></thead><tbody id="rows-blyt"></tbody></table></div>
          <div class="vbar"><svg class="i10"><use href="#chev-u"/></svg><i class="th-blyt"></i><svg class="i10"><use href="#chev-d"/></svg></div>
          <div class="hbar"><svg class="i10"><use href="#chev-l"/></svg><i></i><svg class="i10"><use href="#chev-r"/></svg></div>
        </div>
        <aside class="preview"><h2>Page_000_large_2.bclyt</h2><p>BCLYT-Datei</p><svg class="pv-page"><use href="#page-xl"/></svg><dl class="wide"><dt>Änderungsdatum:</dt><dd>18.03.2016 22:27</dd><dt>Größe:</dt><dd>312 Bytes</dd><dt>Erstelldatum:</dt><dd>18.03.2016 22:27</dd><dt>Verfügbarkeit:</dt><dd>Offline verfügbar</dd></dl></aside>
      </div>
      <footer class="status"><span>53 Elemente</span><span>1 Element ausgewählt (312 Bytes)</span><button class="ib viewbtn on" aria-label="Details"><svg class="i16"><use href="#v-det"/></svg></button><button class="ib viewbtn" aria-label="Miniaturansicht"><svg class="i14"><use href="#v-l"/></svg></button></footer>
    </div>
  </section>
</main>

<footer class="taskbar">
  <button class="start" aria-label="Start"><svg class="i14"><use href="#win"/></svg></button>
  <button class="task"><svg class="i-file"><use href="#folder"/></svg>DecryptedManual</button>
  <button class="task"><svg class="i-file"><use href="#folder"/></svg>timg</button>
  <button class="task"><svg class="i-file"><use href="#folder"/></svg>blyt</button>
  <button class="task apart"><svg class="i16"><use href="#firefox"/></svg>Twitter / Notification...</button>
  <button class="pin" aria-label="Skype"><svg class="i16"><use href="#skype"/></svg></button>
  <button class="pin" aria-label="HxD"><svg class="i16"><use href="#hxd"/></svg></button>
  <button class="task"><svg class="i16"><use href="#vlc"/></svg>Rokka no Yuusha [六...</button>
  <button class="task apart"><svg class="i16"><use href="#nw"/></svg>NW LayoutEditor</button>
  <div class="tray"><svg class="arr"><use href="#up"/></svg><svg class="i16"><use href="#win"/></svg><svg class="i16"><use href="#net"/></svg><svg class="i16"><use href="#vol"/></svg><span class="lang">DEU</span><time>22:31</time></div>
</footer>
</div>
<script src="app.js"></script>
</body>
</html>
```

FILE: app.js
```javascript
const svg = (id, cls) => `<svg class="${cls}"><use href="#${id}"/></svg>`;

const row = (icon, name, date, type, size, selected) =>
  `<tr${selected ? ' class="selected"' : ''}><td>${svg(icon, icon === 'arc' ? 'i16' : 'i-file')}<span>${name}</span></td><td>${date}</td><td>${type}</td><td>${size === '' ? '' : size + ' KB'}</td></tr>`;

const fill = (id, rows) => { document.getElementById(id).innerHTML = rows.join(''); };

const D25 = '18.03.2016 22:25', D27 = '18.03.2016 22:27', D28 = '18.03.2016 22:28', OLD = '07.03.2016 18:39';

const folders = [['BcmaInfo', D25], ['button_SELECT', D25], ['command', D25], ['command_0', D25], ['Common_texture', D25],
  ['EUR_de_index', D27], ['EUR_de_large', D27], ['EUR_de_small', D27], ['EUR_de_texture', D28]];
const archives = [['BcmaInfo', D25, 26], ['button_SELECT', D25, 5], ['command', D25, 9], ['command_0', D25, 9], ['Common_texture', D25, 26],
  ['EUR_de_index', D27, 5], ['EUR_de_large', D27, 309], ['EUR_de_small', D27, 280], ['EUR_de_texture', D28, 17]];
const languages = { en: [2, 64, 61, 8], es: [2, 69, 64, 8], fr: [2, 72, 66, 8], it: [2, 69, 64, 8], nl: [1, 43, 40, 8] };
for (const [lang, sizes] of Object.entries(languages)) {
  ['index', 'large', 'small', 'texture'].forEach((part, i) => archives.push([`EUR_${lang}_${part}`, OLD, sizes[i]]));
}
fill('rows-manual', [
  ...folders.map(([n, d]) => row('folder', n, d, 'Dateiordner', '', n === 'command')),
  ...archives.map(([n, d, s]) => row('arc', n + '.arc', d, 'Universal Extractor...', s)),
  row('arc', '', '', '', '')
]);

const timg = [['button_HOME', 5], ['button_START', 5], ['button_ZL', 1], ['button_ZR', 1], ['exclamation', 2], ['frame_R_gray_01', 1],
  ['free_tips_01', 2], ['spotpass_icon_W', 3], ['threeb_heading_big_01', 2], ['threeb_heading_big_02', 2], ['threeb_heading_big_shadow', 2],
  ['threeb_heading_mid_01', 1], ['threeb_heading_mid_02', 1], ['threeb_photo_frame', 1], ['threeb_photo_frame_shadow', 1],
  ['threeb_table_left_blue_01', 1], ['threeb_table_left_blue_02', 1]];
fill('rows-timg', timg.map(([n, s]) => row('page', n + '.bclim', D25, 'BCLIM-Datei', s)));

const blyt = [['000_large_0', 10], ['000_large_1', 24], ['000_large_2', 1], ['000_large_3', 6], ['000_large_4', 1], ['000_large_bg', 5],
  ['000_large_info', 3], ['001_large_0', 18], ['001_large_bg', 2], ['001_large_info', 3], ['002_large_0', 4]];
fill('rows-blyt', blyt.map(([n, s]) => row('page', `Page_${n}.bclyt`, D27, 'BCLYT-Datei', s, n === '000_large_2')));

document.querySelectorAll('.tree').forEach(tree => {
  const slots = Object.fromEntries(tree.dataset.tree.split(' ').map(s => s.split(':')));
  const last = Math.max(...Object.keys(slots).map(Number));
  let html = '';
  for (let i = 0; i <= last; i++) {
    const icon = slots[i];
    const marked = icon === 'sel' || icon === 'n-pc';
    html += `<li${marked ? ' class="marked"' : ''}>${icon && icon !== 'sel' ? '<span>' + svg(icon, 'i-file') + '</span>' : ''}</li>`;
  }
  tree.innerHTML = html;
});
```

FILE: styles.css
```css
* { box-sizing: border-box; }
html, body { height: 100%; margin: 0; }
body { overflow: hidden; background: #000; font: 12px/16px "Open Sans", "Noto Sans", "Noto Sans CJK JP", sans-serif; color: #1e1e1e; }
button { font: inherit; color: inherit; background: none; border: 0; padding: 0; margin: 0; }
h1, h2, p, ul, dl, dd { margin: 0; padding: 0; font-weight: 400; }
svg { display: block; flex: none; }
.sprite { position: absolute; }

.screen { display: flex; flex-direction: column; height: 100%; }
.desktop { position: relative; flex: 1; }
.window { position: absolute; display: flex; flex-direction: column; background: #ebebeb; border: 1px solid #cfcfcf; padding: 0 6px 6px; }
.win-manual { inset: 0 953px 0 7px; }
.win-timg { inset: 0 -3px 337px 950px; }
.win-blyt { inset: 563px -5px -2px 954px; }
.desk-mark { position: absolute; color: #fff; font-size: 11px; line-height: 12px; }
.desk-label { left: 2px; top: 584px; }
.desk-red, .desk-red2 { left: 6px; width: 1px; height: 8px; background: #e06a6a; }
.desk-red { top: 376px; }
.desk-red2 { top: 481px; }

/* icon boxes */
.i8 { width: 8px; height: 8px; }
.i10 { width: 10px; height: 10px; }
.i12 { width: 12px; height: 12px; }
.i14 { width: 14px; height: 14px; }
.i16 { width: 16px; height: 16px; }
.i20 { width: 20px; height: 20px; }
.i32 { width: 32px; height: 32px; }
.i-file { width: 14px; height: 16px; }
.arr { width: 6px; height: 4px; color: #222; }
.ib { display: flex; align-items: center; justify-content: center; }

/* title bar */
.titlebar { display: flex; flex: none; height: 29px; }
.qat, .winbtns { display: flex; flex: 1; }
.qat { align-items: center; padding-left: 1px; gap: 8px; }
.qat .bar { width: 1px; height: 11px; background: #777; }
.qat .bar:nth-child(2) { margin-right: 2px; }
.titlebar h1 { margin-right: 10px; font-size: 14px; line-height: 29px; color: #444; }
.winbtns { justify-content: flex-end; align-items: flex-start; gap: 17px; }
.winbtns .ib { height: 20px; }
.winbtns .closebtn { width: 45px; margin-left: -9px; background: #bcbcbc; }

.client { display: flex; flex-direction: column; flex: 1; min-height: 0; background: #fff; border: 1px solid #d9dadb; }

/* tabs */
.tabs { display: flex; flex: none; height: 24px; border-bottom: 1px solid #dadbdc; color: #444; }
.tab { height: 23px; padding-top: 2px; }
.file { width: 56px; padding-top: 0; background: #1979ca; color: #fff; }
.t-start { width: 52px; }
.t-share { width: 82px; }
.t-view { width: 66px; }
.tab.active { height: 24px; padding-top: 1px; background: #f5f6f7; border: 1px solid #dadbdc; border-width: 1px 1px 0; }
.tabtools { display: flex; align-items: center; gap: 10px; margin-left: auto; padding-right: 4px; color: #888; }

/* ribbon */
.ribbon { display: grid; flex: none; height: 92px; background: #f5f6f7; border-bottom: 1px solid #dadbdc; color: #444; font-size: 11px; }
.ribbon-view { grid-template-columns: 139px 296px 94px 294px 66px 1fr; }
.ribbon-start { grid-template-columns: 261px 260px 83px 171px 136px 1fr; }
.group { display: flex; flex-direction: column; margin: 1px 0 3px; border-right: 1px solid #e0e1e2; min-width: 0; white-space: nowrap; }
.tools { display: flex; flex: 1; min-height: 0; }
.group > p { text-align: center; line-height: 12px; color: #8c8c8c; }
.big { display: flex; flex-direction: column; align-items: center; line-height: 13px; padding-top: 5px; gap: 4px; }
.big span { display: block; }
.big span .arr { display: inline-block; vertical-align: 2px; }
.w-nav { width: 113px; }
.w-sort { width: 59px; }
.w-hide { width: 120px; }
.w-opt { width: 62px; }
.w-copy { width: 61px; }
.w-paste { width: 44px; margin-right: 7px; }
.w-move { width: 74px; }
.w-copyto { width: 47px; }
.w-del { width: 51px; }
.w-ren { width: 73px; }
.w-new { width: 49px; }
.w-prop { width: 84px; }
.sep { width: 1px; margin: 8px 0 8px 5px; background: #e0e1e2; }
.stack { display: flex; flex-direction: column; padding-top: 3px; }
.small { display: flex; align-items: center; flex: none; height: 22px; gap: 4px; }
.stack.sel { padding-left: 7px; }
.hot { background: #fdfefe; padding-right: 5px; }
.checks { width: 169px; padding-left: 7px; }
.checks .small { gap: 7px; }
.checks input { appearance: none; width: 13px; height: 13px; margin: 0; border: 1px solid #5b6470; background: #fff; }
.checks input:checked::after { content: ""; display: block; width: 4px; height: 8px; margin: 0 0 0 3px; border: solid #222; border-width: 0 2px 2px 0; transform: rotate(40deg); }
.ribbon button:disabled, button:disabled .arr { color: #8f8f8f; }
.ribbon button:disabled > svg:first-child { filter: grayscale(1) sepia(.6) hue-rotate(180deg) opacity(.75); }
.tint > svg:first-child { filter: grayscale(1) brightness(1.5) sepia(.6) hue-rotate(180deg); }

.gallery { display: flex; margin: 5px 9px 0 5px; width: 281px; height: 62px; border: 1px solid #d9dbdd; background: #fafbfd; }
.gitems { display: grid; grid-template-columns: 132px 133px; grid-auto-rows: 20px; flex: none; }
.gitems button { display: flex; align-items: center; gap: 5px; padding-left: 2px; }
.gitems .on { background: #cfe4fb; outline: 1px solid #5a9bdc; outline-offset: -1px; }
.gscroll { display: flex; flex-direction: column; align-items: center; justify-content: space-around; flex: 1; border-left: 1px solid #e0e1e2; }
.dim { color: #aaa; }

/* address row */
.navrow { display: flex; flex: none; align-items: center; height: 37px; padding: 0 12px 1px 10px; }
.hist { margin-right: 8px; color: #666; }
.hist.off { color: #c8c8c8; margin-right: 11px; }
.navrow > .arr { margin-right: 14px; color: #555; }
.address { display: flex; align-items: center; flex: 1; height: 22px; margin: 0 12px 0 6px; border: 1px solid #dadada; padding-left: 2px; min-width: 0; font-size: 11px; }
.address a { color: #1e1e1e; text-decoration: none; white-space: nowrap; display: flex; align-items: center; }
.address a::before { content: ""; margin: 0 10px; border: solid transparent; border-width: 4px 0 4px 4px; border-left-color: #666; }
.address .last { margin-left: auto; margin-right: 5px; color: #555; }
.reload { width: 26px; height: 20px; border-left: 1px solid #dadada; }
.search { display: flex; align-items: center; width: 98px; height: 22px; border: 1px solid #dadada; padding: 0 8px; }
.search input { flex: 1; min-width: 0; border: 0; padding: 0; font: inherit; font-size: 11px; outline: 0; background: none; }
.search input::placeholder { color: #777; }

/* window body */
.body { display: flex; flex: 1; min-height: 0; }
.tree { width: 41px; flex: none; list-style: none; overflow: hidden; }
.tree li { display: flex; justify-content: flex-end; align-items: center; height: 21px; margin: 0 1px; padding-right: 2px; border: 1px solid transparent; }
.tree li.marked { background: #f7f7f7; border-color: #dedede; border-right: 0; padding-right: 3px; }
.tree span { width: 7px; overflow: hidden; }
.vbar { display: flex; flex-direction: column; align-items: center; flex: none; width: 16px; background: #f0f0f0; color: #505050; padding: 4px 0; }
.vbar i { width: 100%; background: #cdcdcd; }
.vbar svg:last-child { margin-top: auto; }
.treebar { margin-right: 1px; }
.th-manual-tree { height: 194px; margin-top: 450px; }
.th-manual { height: 387px; margin-top: 3px; }
.th-timg-tree { height: 155px; margin-top: 129px; }
.th-blyt-tree { height: 44px; margin-top: 68px; }
.th-blyt { height: 45px; margin-top: 3px; }
.scroller { display: grid; grid-template: 1fr 17px / 1fr 16px; flex: 1; min-width: 0; min-height: 0; margin-right: 1px; }
.scroller .list { min-height: 0; }
.hbar { display: flex; align-items: center; margin: 1px 0 0 3px; padding: 0 3px; background: #f0f0f0; color: #505050; }
.hbar i { flex: 1; height: 100%; margin: 0 4px; background: #cdcdcd; }

.list { flex: 1; min-width: 0; overflow: hidden; border-left: 1px solid #f2f2f2; font-size: 11px; }
table { table-layout: fixed; width: 574px; margin-left: 15px; border-spacing: 0; }
th { position: relative; height: 31px; padding: 0 0 0 6px; vertical-align: top; text-align: left; font-weight: 400; line-height: 26px; color: #4c607a; }
th::after { content: ""; position: absolute; right: 0; top: 0; width: 1px; height: 21px; background: #e3e8ee; }
.c-name { width: 258px; padding-left: 3px; }
.c-name::before { content: ""; position: absolute; left: 123px; top: 1px; border: solid transparent; border-width: 0 4px 4px; border-bottom-color: #6e8ea8; }
.c-date, .c-type { width: 120px; }
.c-size { width: 76px; }
.c-size::after { right: -4px; }
td { height: 21px; padding: 0 0 0 6px; white-space: nowrap; color: #6d6d6d; line-height: 19px; }
td:first-child { display: flex; align-items: center; gap: 5px; padding-left: 5px; color: #1e0a24; }
td:first-child span { line-height: 21px; }
td .i16 { margin: 0 -1px; }
td:last-child { text-align: right; padding-right: 4px; }
tr.selected { background: #f7f7f7; outline: 1px solid #dedede; outline-offset: -1px; }

.preview { flex: none; width: 276px; border-left: 1px solid #f0f0f0; padding: 8px 0 0 24px; color: #1e395b; font-size: 11px; }
.preview h2 { font-size: 15px; line-height: 20px; }
.preview p { padding-top: 5px; }
.pv-folder { width: 90px; height: 98px; margin: 30px 0 6px 5px; }
.pv-page { width: 68px; height: 86px; margin: 13px 0 14px 14px; }
.preview dl { display: grid; grid-template-columns: 85px 1fr; line-height: 18px; }
.preview dl.wide { grid-template-columns: 107px 1fr; }
.preview dt { color: #5a6b80; }

.status { display: flex; align-items: center; flex: none; height: 24px; padding: 2px 4px 0 14px; font-size: 11px; color: #1e395b; }
.status span { padding-right: 10px; margin-right: 10px; border-right: 1px solid #efefef; }
.viewbtn { width: 22px; height: 22px; }
.viewbtn.on { margin-left: auto; background: #cbe8f6; border: 1px solid #3c96c4; }

/* taskbar */
.taskbar { position: relative; display: flex; align-items: center; flex: none; height: 30px; background: #0b2d48; border-top: 1px solid #4f6e86; color: #fff; white-space: nowrap; }
.start { width: 42px; display: flex; justify-content: center; }
.task { display: flex; align-items: center; gap: 5px; width: 158px; height: 28px; margin-right: 2px; padding-left: 8px; background: #3d566c; border: 1px solid #7890a3; font-size: 12px; }
.task.apart { margin-left: 2px; }
.pin { display: flex; justify-content: center; width: 47px; }
.tray { display: flex; align-items: center; gap: 8px; margin-left: auto; padding-right: 31px; }
.tray .arr { color: #fff; margin-right: 6px; }
.lang { margin: 0 19px 0 7px; }
```
